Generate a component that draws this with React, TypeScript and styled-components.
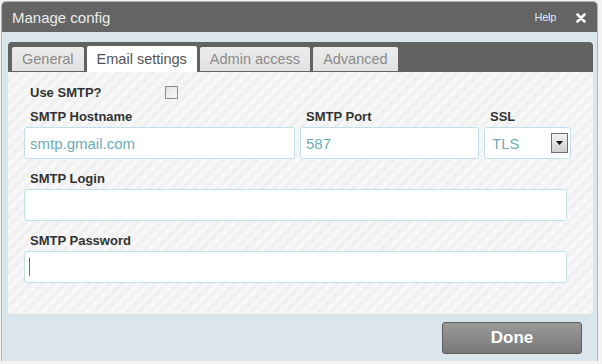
import React from 'react'
import styled, { createGlobalStyle } from 'styled-components'

const GlobalStyle = createGlobalStyle`
  html, body {
    margin: 0;
    padding: 0;
    background: #f2f2f2;
    font-family: "Liberation Sans", Arial, sans-serif;
  }
`

const Dialog = styled.div`
  margin: 2px 0 0 2px;
  width: 595px;
  height: 359px;
  background: #dae6ec;
  border-radius: 4px 4px 0 0;
  box-shadow: 0 0 0 1px #b4b4b4;
  display: flex;
  flex-direction: column;
  overflow: hidden;
`

const TitleBar = styled.div`
  height: 30px;
  flex: none;
  background: #646464;
  display: flex;
  align-items: center;
  padding: 0 11px 0 10px;
`

const Title = styled.div`
  flex: 1;
  color: #ececec;
  font-size: 15px;
`

const HelpLink = styled.a`
  color: #dfeaf2;
  font-size: 11px;
  margin-right: 20px;
  letter-spacing: -0.3px;
`

const CloseButton = styled.span`
  display: flex;
  align-items: center;
  margin-top: 1px;
`

const Body = styled.div`
  flex: 1;
  padding: 10px 4px 0 6px;
  display: flex;
  flex-direction: column;
`

const TabBar = styled.div`
  height: 30px;
  background: #626262;
  border-radius: 4px 4px 0 0;
  display: flex;
  align-items: flex-end;
  gap: 3px;
  padding-left: 4px;
`

const Tab = styled.div<{ active?: boolean }>`
  height: ${({ active }) => (active ? '26px' : '24px')};
  margin-bottom: ${({ active }) => (active ? '0' : '1px')};
  padding: 0 ${({ active }) => (active ? '10px' : '10px')};
  display: flex;
  align-items: center;
  font-size: 14.5px;
  color: ${({ active }) => (active ? '#545454' : '#8a8a8a')};
  background: ${({ active }) => (active ? '#ffffff' : 'linear-gradient(#ececec, #e2e2e2)')};
  border-radius: 2px 2px 0 0;
`

const Content = styled.div`
  height: 242px;
  box-sizing: border-box;
  padding: 12px 23px 0 16px;
  border-radius: 0 0 3px 3px;
  background: repeating-linear-gradient(
    135deg,
    #f7f7f7 0px,
    #f7f7f7 4px,
    #f1f1f1 4px,
    #f1f1f1 8px
  );
`

const CheckRow = styled.div`
  display: flex;
  align-items: center;
  height: 16px;
  margin-bottom: 9px;
`

const CheckLabel = styled.span`
  width: 135px;
  padding-left: 6px;
  font-size: 13px;
  font-weight: bold;
  color: #333;
`

const CheckBox = styled.span`
  width: 11px;
  height: 11px;
  border: 1px solid #8c8c8c;
  background: linear-gradient(135deg, #e2e2e2, #fafafa);
`

const Row = styled.div`
  display: flex;
  gap: 5px;
`

const Field = styled.div<{ width?: number }>`
  width: ${({ width }) => (width ? `${width}px` : 'auto')};
  flex: ${({ width }) => (width ? 'none' : '1')};
  margin: 0 ${({ width }) => (width ? '0' : '3px')} 12px 0;
`

const Label = styled.label`
  display: block;
  height: 16px;
  line-height: 16px;
  margin-bottom: 2px;
  padding-left: 6px;
  font-size: 13px;
  font-weight: bold;
  color: #333;
`

const Input = styled.input`
  display: block;
  width: 100%;
  height: 32px;
  box-sizing: border-box;
  padding: 0 5px;
  border: 1px solid #bfe0ea;
  border-radius: 3px;
  background: #fff;
  font-family: "Liberation Sans", Arial, sans-serif;
  font-size: 15px;
  color: #6aaeb8;
  outline: none;
`

const InputWrap = styled.div`
  position: relative;
`

const Caret = styled.span`
  position: absolute;
  left: 5px;
  top: 7px;
  width: 1px;
  height: 18px;
  background: #4c7c7c;
`

const Select = styled.div`
  height: 32px;
  box-sizing: border-box;
  border: 1px solid #bfe0ea;
  border-radius: 3px;
  background: #fff;
  display: flex;
  align-items: center;
  padding: 0 2px 0 7px;
`

const SelectValue = styled.span`
  flex: 1;
  font-size: 15px;
  color: #6aaeb8;
`

const SelectArrow = styled.span`
  width: 15px;
  height: 18px;
  border: 1px solid #6e6e6e;
  background: linear-gradient(#f2f2f2, #cfcfcf);
  display: flex;
  align-items: center;
  justify-content: center;
`

const Footer = styled.div`
  flex: 1;
  display: flex;
  justify-content: flex-end;
  align-items: flex-start;
  padding: 8px 11px 0 0;
`

const DoneButton = styled.button`
  width: 140px;
  height: 32px;
  border: 1px solid #5e5e5e;
  border-radius: 3px;
  background: linear-gradient(#9a9a9a, #787878);
  color: #fff;
  font-family: "Liberation Sans", Arial, sans-serif;
  font-size: 17px;
  font-weight: bold;
  cursor: pointer;
`

const App = () => {
  return (
    <>
      <GlobalStyle />
      <Dialog>
        <TitleBar>
          <Title>Manage config</Title>
          <HelpLink>Help</HelpLink>
          <CloseButton>
            <svg width="10" height="10" viewBox="0 0 10 10">
              <path d="M1.5 1.5 L8.5 8.5 M8.5 1.5 L1.5 8.5" stroke="#fff" strokeWidth="2.6" strokeLinecap="round" />
            </svg>
          </CloseButton>
        </TitleBar>
        <Body>
          <TabBar>
            <Tab>General</Tab>
            <Tab active>Email settings</Tab>
            <Tab>Admin access</Tab>
            <Tab>Advanced</Tab>
          </TabBar>
          <Content>
            <CheckRow>
              <CheckLabel>Use SMTP?</CheckLabel>
              <CheckBox />
            </CheckRow>
            <Row>
              <Field width={271}>
                <Label>SMTP Hostname</Label>
                <Input defaultValue="smtp.gmail.com" />
              </Field>
              <Field width={179}>
                <Label>SMTP Port</Label>
                <Input defaultValue="587" />
              </Field>
              <Field width={87}>
                <Label>SSL</Label>
                <Select>
                  <SelectValue>TLS</SelectValue>
                  <SelectArrow>
                    <svg width="7" height="4" viewBox="0 0 7 4">
                      <path d="M0 0 L7 0 L3.5 4 Z" fill="#111" />
                    </svg>
                  </SelectArrow>
                </Select>
              </Field>
            </Row>
            <Field>
              <Label>SMTP Login</Label>
              <Input />
            </Field>
            <Field>
              <Label>SMTP Password</Label>
              <InputWrap>
                <Input type="password" />
                <Caret />
              </InputWrap>
            </Field>
          </Content>
          <Footer>
            <DoneButton>Done</DoneButton>
          </Footer>
        </Body>
      </Dialog>
    </>
  )
}

export default App
